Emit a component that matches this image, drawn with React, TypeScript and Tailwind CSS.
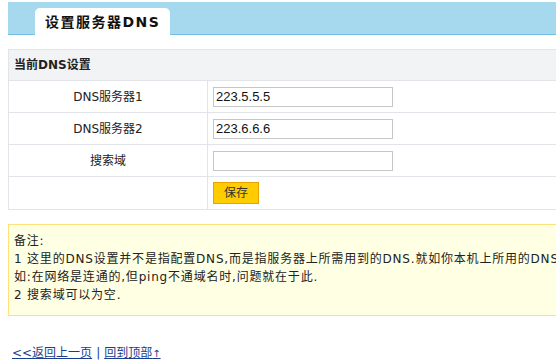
import React from "react";

const font = { fontFamily: '"DejaVu Sans", Verdana, "Noto Sans CJK SC", sans-serif' };

export default function App() {
  return (
    <div className="w-[556px] h-[363px] overflow-hidden bg-white text-[12px] text-[#222]" style={font}>
      <div className="w-[780px] pl-[8px] pt-[2px]">
        {/* header band */}
        <div className="h-[33px] bg-[#a6d9ee] border-b border-[#72bfe5] flex items-end">
          <div className="ml-[27px] w-[135px] h-[27px] -mb-px bg-white rounded-t-[5px] pl-[10px] flex items-center">
            <span className="text-[14px] font-bold tracking-[1.5px] text-[#111] leading-none pt-[1px]">设置服务器DNS</span>
          </div>
        </div>

        {/* settings table */}
        <div className="mt-[14px] border border-[#e1e4e8]">
          <div className="h-[31px] bg-[#f2f3f5] border-b border-[#e1e4e8] flex items-center pl-[5px]">
            <span className="font-bold">当前DNS设置</span>
          </div>
          {[
            { label: "DNS服务器1", value: "223.5.5.5" },
            { label: "DNS服务器2", value: "223.6.6.6" },
            { label: "搜索域", value: "" },
          ].map((r) => (
            <div key={r.label} className="h-[32px] border-b border-[#e1e4e8] flex">
              <div className="w-[199px] border-r border-[#e1e4e8] flex items-center justify-center">{r.label}</div>
              <div className="flex items-center pl-[5px]">
                <input
                  defaultValue={r.value}
                  className="w-[180px] h-[20px] border border-[#c6c6c6] px-[2px] text-[13px] text-[#111] outline-none"
                  style={{ fontFamily: '"Liberation Sans", Arial, sans-serif' }}
                />
              </div>
            </div>
          ))}
          <div className="h-[32px] flex">
            <div className="w-[199px] border-r border-[#e1e4e8]" />
            <div className="flex items-center pl-[5px]">
              <button className="w-[46px] h-[22px] bg-[#ffcc00] border border-[#e9a300] text-[12px] text-[#333] leading-none">保存</button>
            </div>
          </div>
        </div>

        {/* note */}
        <div className="mt-[14px] h-[92px] border border-[#ffe07a] bg-[#ffffe3] pl-[5px] pt-[7px] leading-[18px] tracking-[0.8px] whitespace-nowrap">
          <div>备注:</div>
          <div>1 这里的DNS设置并不是指配置DNS,而是指服务器上所需用到的DNS.就如你本机上所用的DNS一样,设置错误将无法解析域名.例</div>
          <div>如:在网络是连通的,但ping不通域名时,问题就在于此.</div>
          <div>2 搜索域可以为空.</div>
        </div>

        {/* links */}
        <div className="mt-[29px] pl-[4px] leading-[16px] text-[#1a3d8f]">
          <a href="#" className="underline">&lt;&lt;返回上一页</a>
          <span className="mx-[4px]">|</span>
          <a href="#" className="underline">回到顶部<span className="text-[10px]">↑</span></a>
        </div>
      </div>
    </div>
  );
}
